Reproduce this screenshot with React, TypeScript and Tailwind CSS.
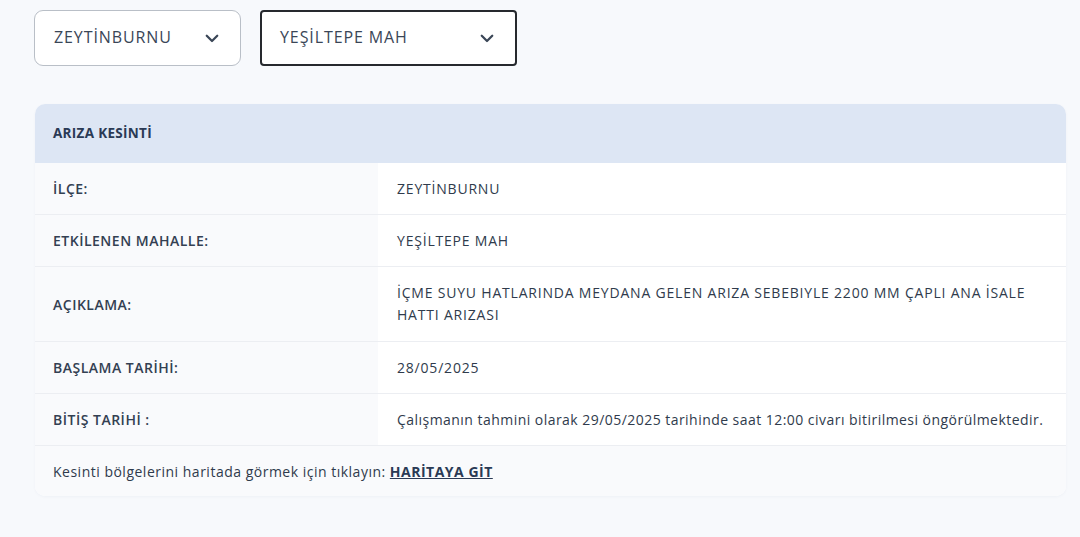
import type { FC } from "react";

interface Row {
    label: string;
    value: string;
    tall?: boolean;
    sentence?: boolean;
}

const rows: Row[] = [
    { label: "İLÇE:", value: "ZEYTİNBURNU" },
    { label: "ETKİLENEN MAHALLE:", value: "YEŞİLTEPE MAH" },
    {
        label: "AÇIKLAMA:",
        value: "İÇME SUYU HATLARINDA MEYDANA GELEN ARIZA SEBEBIYLE 2200 MM ÇAPLI ANA İSALE HATTI ARIZASI",
        tall: true,
    },
    { label: "BAŞLAMA TARİHİ:", value: "28/05/2025" },
    {
        label: "BİTİŞ TARİHİ :",
        value: "Çalışmanın tahmini olarak 29/05/2025 tarihinde saat 12:00 civarı bitirilmesi öngörülmektedir.",
        sentence: true,
    },
];

const Chevron: FC = () => (
    <svg width="18" height="18" viewBox="0 0 24 24" fill="none" stroke="currentColor" strokeWidth="3" strokeLinecap="round" strokeLinejoin="round">
        <path d="M5 9l7 7 7-7" />
    </svg>
);

const App: FC = () => {
    return (
        <div className="min-h-[537px] w-[1080px] bg-[#f7f9fc] pt-[10px] font-['Open_Sans',sans-serif] text-[#2f3b4c]">

            {/* Filtros */}
            <div className="flex gap-[19px] pl-[34px]">
                <div className="flex h-[56px] w-[207px] items-center justify-between rounded-[9px] border border-[#b9bfc7] bg-white pl-[19px] pr-[19px] text-[16px] tracking-[0.9px] text-[#3a4657]">
                    <span className="-mt-[2px]">ZEYTİNBURNU</span>
                    <Chevron />
                </div>
                <div className="flex h-[56px] w-[257px] items-center justify-between rounded-[4px] border-2 border-[#26292e] bg-white pl-[18px] pr-[19px] text-[16px] tracking-[0.9px] text-[#3a4657]">
                    <span className="-mt-[2px]">YEŞİLTEPE MAH</span>
                    <Chevron />
                </div>
            </div>

            {/* Tarjeta */}
            <div className="ml-[35px] mt-[38px] w-[1031px] overflow-hidden rounded-[10px] bg-white shadow-[0_1px_3px_rgba(30,50,90,0.04)]">

                <div className="flex h-[59px] items-center bg-[#dde6f4] pl-[18px] text-[13.5px] font-bold tracking-[0.3px] text-[#2a3a55]">
                    ARIZA KESİNTİ
                </div>

                {rows.map((row) => (
                    <div
                        key={row.label}
                        className={`flex border-b border-[#eceef2] text-[14px] ${row.tall ? "h-[75px]" : "h-[52px]"}`}
                    >
                        <div className="flex w-[343px] shrink-0 items-center bg-[#f9fafc] pl-[18px] font-semibold tracking-[0.5px] text-[#334052]">
                            {row.label}
                        </div>
                        <div
                            className={`flex flex-1 items-center pl-[19px] pr-[20px] leading-[22px] text-[#2f3b4c] ${
                                row.sentence ? "whitespace-nowrap tracking-[0.46px]" : "tracking-[0.8px]"
                            }`}
                        >
                            {row.value}
                        </div>
                    </div>
                ))}

                <div className="flex h-[50px] items-center bg-[#f9fafc] pl-[18px] text-[14px] tracking-[0.5px] text-[#2f3b4c]">
                    Kesinti bölgelerini haritada görmek için tıklayın:&nbsp;
                    <a className="font-bold text-[#2a3a55] underline">HARİTAYA GİT</a>
                </div>

            </div>

        </div>
    );
};

export default App;
